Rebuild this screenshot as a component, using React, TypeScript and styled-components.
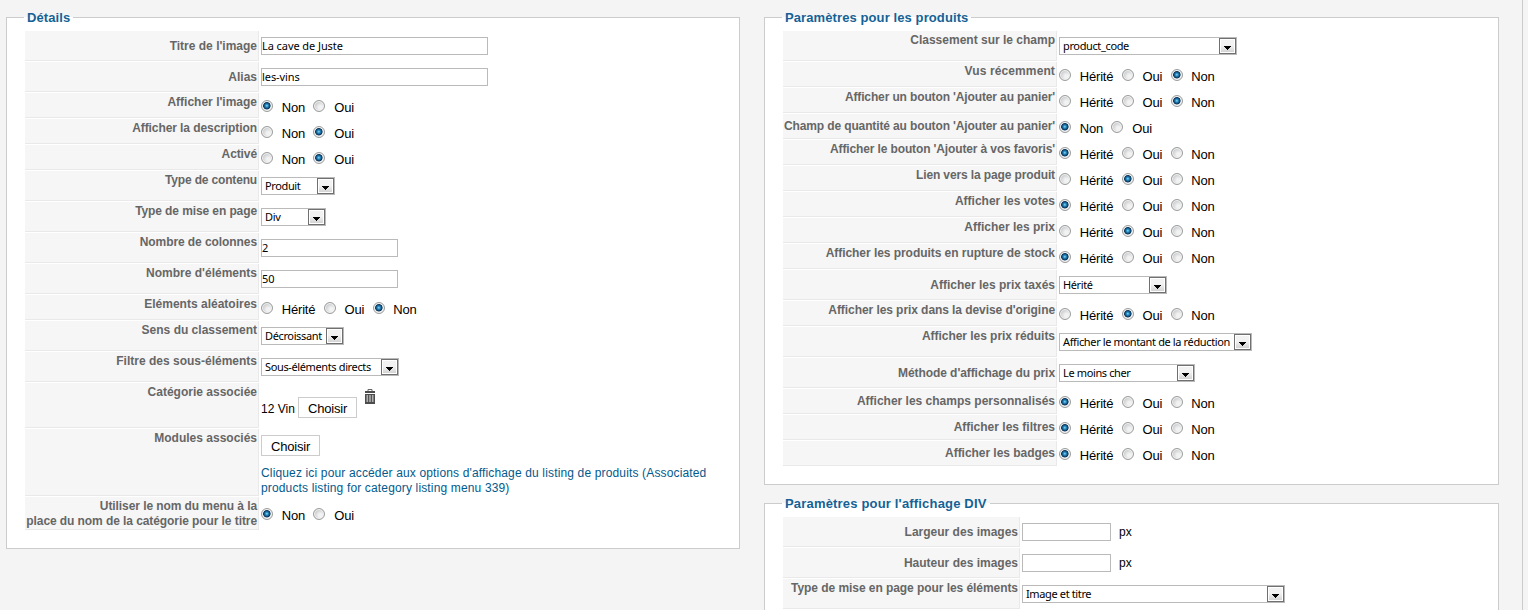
import React, { useState } from 'react'
import styled, { createGlobalStyle } from 'styled-components'

type FieldProps = {
  label: React.ReactNode
  height?: number
  middle?: boolean
  spacing?: number
  children: React.ReactNode
}

const Field = ({ label, height = 25, middle, spacing = 0, children }: FieldProps) => (
  <Row $height={height}>
    <Key $middle={middle} $spacing={spacing}>
      {label}
    </Key>
    <Value>{children}</Value>
  </Row>
)

const RadioGroup = ({ options, value }: { options: string[]; value: string }) => {
  const [selected, setSelected] = useState(value)

  return (
    <Radios>
      {options.map((option) => (
        <Option key={option}>
          <Radio
            type="radio"
            checked={selected === option}
            onChange={() => setSelected(option)}
          />
          {option}
        </Option>
      ))}
    </Radios>
  )
}

const YesNo = ({ value }: { value: string }) => (
  <RadioGroup options={['Non', 'Oui']} value={value} />
)

const Inherit = ({ value }: { value: string }) => (
  <RadioGroup options={['Hérité', 'Oui', 'Non']} value={value} />
)

const Select = ({ width, children }: { width: number; children: string }) => (
  <SelectBox $width={width}>
    <SelectText>{children}</SelectText>
    <Arrow>
      <svg width="7" height="4" viewBox="0 0 7 4" shapeRendering="crispEdges">
        <path d="M0 0h7v1H6v1H5v1H4v1H3V3H2V2H1V1H0z" fill="#000" />
      </svg>
    </Arrow>
  </SelectBox>
)

const TrashIcon = () => (
  <Trash width="10" height="15" viewBox="0 0 10 15">
    <path d="M3 2V0.5h4V2" fill="none" stroke="#666" />
    <path d="M0 2h10v2H0z" fill="#4c4c4c" />
    <path d="M0 5h10v10H0z" fill="#4c4c4c" />
    <path d="M1.5 6h1.6v7H1.5zM4.2 6h1.6v7H4.2zM6.9 6h1.6v7H6.9z" fill="#b0b0b0" />
  </Trash>
)

const App = () => (
  <Page>
    <GlobalStyle />
    <Details>
      <Legend>Détails</Legend>
      <Rows $keyWidth={234}>
        <Field label="Titre de l'image" height={30} middle>
          <Input $width={227} defaultValue="La cave de Juste" />
        </Field>
        <Field label="Alias" height={30} middle>
          <Input $width={227} defaultValue="les-vins" />
        </Field>
        <Field label="Afficher l'image">
          <YesNo value="Non" />
        </Field>
        <Field label="Afficher la description" spacing={-0.08}>
          <YesNo value="Oui" />
        </Field>
        <Field label="Activé" spacing={-0.1}>
          <YesNo value="Oui" />
        </Field>
        <Field label="Type de contenu" height={30} spacing={-0.17}>
          <Select width={74}>Produit</Select>
        </Field>
        <Field label="Type de mise en page" height={30} spacing={-0.1}>
          <Select width={65}>Div</Select>
        </Field>
        <Field label="Nombre de colonnes" height={30} spacing={-0.08}>
          <Input $width={137} defaultValue="2" />
        </Field>
        <Field label="Nombre d'éléments" height={30}>
          <Input $width={137} defaultValue="50" />
        </Field>
        <Field label="Eléments aléatoires">
          <Inherit value="Non" />
        </Field>
        <Field label="Sens du classement" height={30}>
          <Select width={83}>Décroissant</Select>
        </Field>
        <Field label="Filtre des sous-éléments" height={30}>
          <Select width={138}>Sous-éléments directs</Select>
        </Field>
        <Field label="Catégorie associée" height={45}>
          <Category>
            <CategoryName>12 Vin</CategoryName>
            <Choose>Choisir</Choose>
            <TrashIcon />
          </Category>
        </Field>
        <Field label="Modules associés" height={67}>
          <Choose>Choisir</Choose>
          <Link>
            Cliquez ici pour accéder aux options d'affichage du listing de produits (Associated
            <br />
            products listing for category listing menu 339)
          </Link>
        </Field>
        <Field
          height={33}
          spacing={-0.08}
          label={
            <>
              Utiliser le nom du menu à la
              <br />
              place du nom de la catégorie pour le titre
            </>
          }
        >
          <Lowered>
            <YesNo value="Non" />
          </Lowered>
        </Field>
      </Rows>
    </Details>
    <Column>
      <Products>
        <Legend>Paramètres pour les produits</Legend>
        <Rows $keyWidth={274}>
          <Field label="Classement sur le champ" height={30}>
            <Select width={178}>product_code</Select>
          </Field>
          <Field label="Vus récemment" spacing={0.12}>
            <Inherit value="Non" />
          </Field>
          <Field label="Afficher un bouton 'Ajouter au panier'" spacing={-0.13}>
            <Inherit value="Non" />
          </Field>
          <Field
            label="Champ de quantité au bouton 'Ajouter au panier'"
            spacing={-0.13}
            middle
          >
            <YesNo value="Non" />
          </Field>
          <Field label="Afficher le bouton 'Ajouter à vos favoris'" spacing={-0.13}>
            <Inherit value="Hérité" />
          </Field>
          <Field label="Lien vers la page produit" spacing={-0.12}>
            <Inherit value="Oui" />
          </Field>
          <Field label="Afficher les votes">
            <Inherit value="Hérité" />
          </Field>
          <Field label="Afficher les prix">
            <Inherit value="Oui" />
          </Field>
          <Field label="Afficher les produits en rupture de stock" spacing={-0.05}>
            <Inherit value="Hérité" />
          </Field>
          <Field label="Afficher les prix taxés" height={30} middle>
            <Select width={108}>Hérité</Select>
          </Field>
          <Field label="Afficher les prix dans la devise d'origine" spacing={-0.07}>
            <Inherit value="Oui" />
          </Field>
          <Field label="Afficher les prix réduits" height={30} spacing={-0.04}>
            <Select width={193}>Afficher le montant de la réduction</Select>
          </Field>
          <Field label="Méthode d'affichage du prix" height={30} spacing={-0.07} middle>
            <Select width={136}>Le moins cher</Select>
          </Field>
          <Field label="Afficher les champs personnalisés" middle>
            <Inherit value="Hérité" />
          </Field>
          <Field label="Afficher les filtres" middle>
            <Inherit value="Hérité" />
          </Field>
          <Field label="Afficher les badges" spacing={-0.04} middle>
            <Inherit value="Hérité" />
          </Field>
        </Rows>
      </Products>
      <DivSettings>
        <Legend $spacing={0.18}>Paramètres pour l'affichage DIV</Legend>
        <Rows $keyWidth={237}>
          <Field label="Largeur des images" height={30} middle>
            <Sized>
              <Input $width={89} />
              px
            </Sized>
          </Field>
          <Field label="Hauteur des images" height={30} middle>
            <Sized>
              <Input $width={89} />
              px
            </Sized>
          </Field>
          <Field label="Type de mise en page pour les éléments" height={30} spacing={-0.06}>
            <Select width={263}>Image et titre</Select>
          </Field>
        </Rows>
      </DivSettings>
    </Column>
  </Page>
)

const GlobalStyle = createGlobalStyle`
  * {
    box-sizing: border-box;
  }
  body {
    margin: 0;
    background: #f4f4f4;
    font-family: 'Liberation Sans', Arial, sans-serif;
    font-size: 12px;
    line-height: 15px;
    color: #000;
  }
`

const Page = styled.div`
  display: flex;
  align-items: flex-start;
  gap: 24px;
  width: 1523px;
  height: 610px;
  padding: 10px 0 0 6px;
  border-right: 1px solid #ccc;
  overflow: hidden;
`

const Column = styled.div`
  display: flex;
  flex-direction: column;
  gap: 11px;
`

const Panel = styled.fieldset`
  min-width: 0;
  margin: 0;
  padding: 6px 18px 0;
  border: 1px solid #ccc;
  background: #fff;
`

const Details = styled(Panel)`
  width: 734px;
  height: 539px;
`

const Products = styled(Panel)`
  width: 735px;
  height: 475px;
`

const DivSettings = styled(Panel)`
  width: 735px;
  height: 160px;
`

const Legend = styled.legend<{ $spacing?: number }>`
  height: 15px;
  margin-left: -1px;
  padding: 0 3px;
  font-size: 13px;
  font-weight: bold;
  letter-spacing: ${({ $spacing = 0.1 }) => $spacing}px;
  color: #146295;
`

const Rows = styled.div<{ $keyWidth: number }>`
  --key-width: ${({ $keyWidth }) => $keyWidth}px;
  display: flex;
  flex-direction: column;
  gap: 1px;
`

const Row = styled.div<{ $height: number }>`
  display: flex;
  height: ${({ $height }) => $height}px;
`

const Key = styled.div<{ $middle?: boolean; $spacing: number }>`
  display: flex;
  flex: none;
  justify-content: flex-end;
  align-items: ${({ $middle }) => ($middle ? 'center' : 'flex-start')};
  width: var(--key-width);
  padding: ${({ $middle }) => ($middle ? '1px' : '2px')} 1px 0 0;
  border-right: 1px solid #e9e9e9;
  border-bottom: 1px solid #e9e9e9;
  background: #f6f6f6;
  color: #666;
  font-weight: bold;
  letter-spacing: ${({ $spacing }) => $spacing}px;
  text-align: right;
  white-space: nowrap;
`

const Value = styled.div`
  padding: 6px 0 0 2px;
  white-space: nowrap;
`

const Input = styled.input<{ $width: number }>`
  display: block;
  width: ${({ $width }) => $width}px;
  height: 18px;
  padding: 0 0 1px;
  border: 1px solid #bababa;
  outline: none;
  background: #fff;
  font-family: 'Noto Sans', Tahoma, sans-serif;
  font-size: 11px;
  letter-spacing: -0.07px;
  color: #000;
`

const SelectBox = styled.div<{ $width: number }>`
  display: flex;
  justify-content: space-between;
  width: ${({ $width }) => $width}px;
  height: 18px;
  padding-left: 3px;
  border: 1px solid #bababa;
  background: #fff;
`

const SelectText = styled.span`
  font-family: 'Noto Sans', Tahoma, sans-serif;
  font-size: 11px;
  line-height: 16px;
  letter-spacing: -0.37px;
`

const Arrow = styled.span`
  display: flex;
  flex: none;
  justify-content: center;
  align-items: flex-end;
  width: 17px;
  height: 16px;
  padding-bottom: 3px;
  border: 1px solid #707070;
  box-shadow: inset 0 0 0 1px #fff;
  background: linear-gradient(#f2f2f2 45%, #cfcfcf);
`

const Radios = styled.div`
  display: flex;
  gap: 8.43px;
  padding-top: 1px;
`

const Option = styled.label`
  display: flex;
  gap: 8.8px;
  font-size: 13px;
  letter-spacing: -0.2px;
`

const Radio = styled.input`
  appearance: none;
  width: 12px;
  height: 12px;
  margin: 0;
  border: 1px solid #9b9c9c;
  border-radius: 50%;
  background: radial-gradient(circle at 65% 65%, #f2f2f2 20%, #c4c6c9 75%);
  box-shadow: inset 0 0 0 1px #f4f4f4;
  &:checked {
    background: radial-gradient(
      circle at 4.8px 4.7px,
      #8fdcf8 0,
      #2a93c6 1.3px,
      #14588a 2.5px,
      #0b2f50 3.4px,
      #dfe3e6 4.1px
    );
  }
`

const Lowered = styled.div`
  padding-top: 4px;
`

const Category = styled.div`
  display: flex;
  align-items: flex-start;
`

const CategoryName = styled.span`
  width: 37px;
  padding-top: 13px;
`

const Choose = styled.button`
  display: block;
  width: 59px;
  height: 21px;
  padding: 2px 0 0;
  border: 1px solid #ccc;
  background: #fff;
  font-family: inherit;
  font-size: 13px;
  letter-spacing: -0.2px;
  color: #000;
  ${Category} & {
    margin-top: 8px;
  }
`

const Trash = styled.svg`
  margin-left: 8px;
`

const Link = styled.a`
  display: block;
  margin-top: 10px;
  letter-spacing: 0.15px;
  color: #025a8d;
`

const Sized = styled.div`
  display: flex;
  gap: 8px;
  line-height: 18px;
`

export default App
